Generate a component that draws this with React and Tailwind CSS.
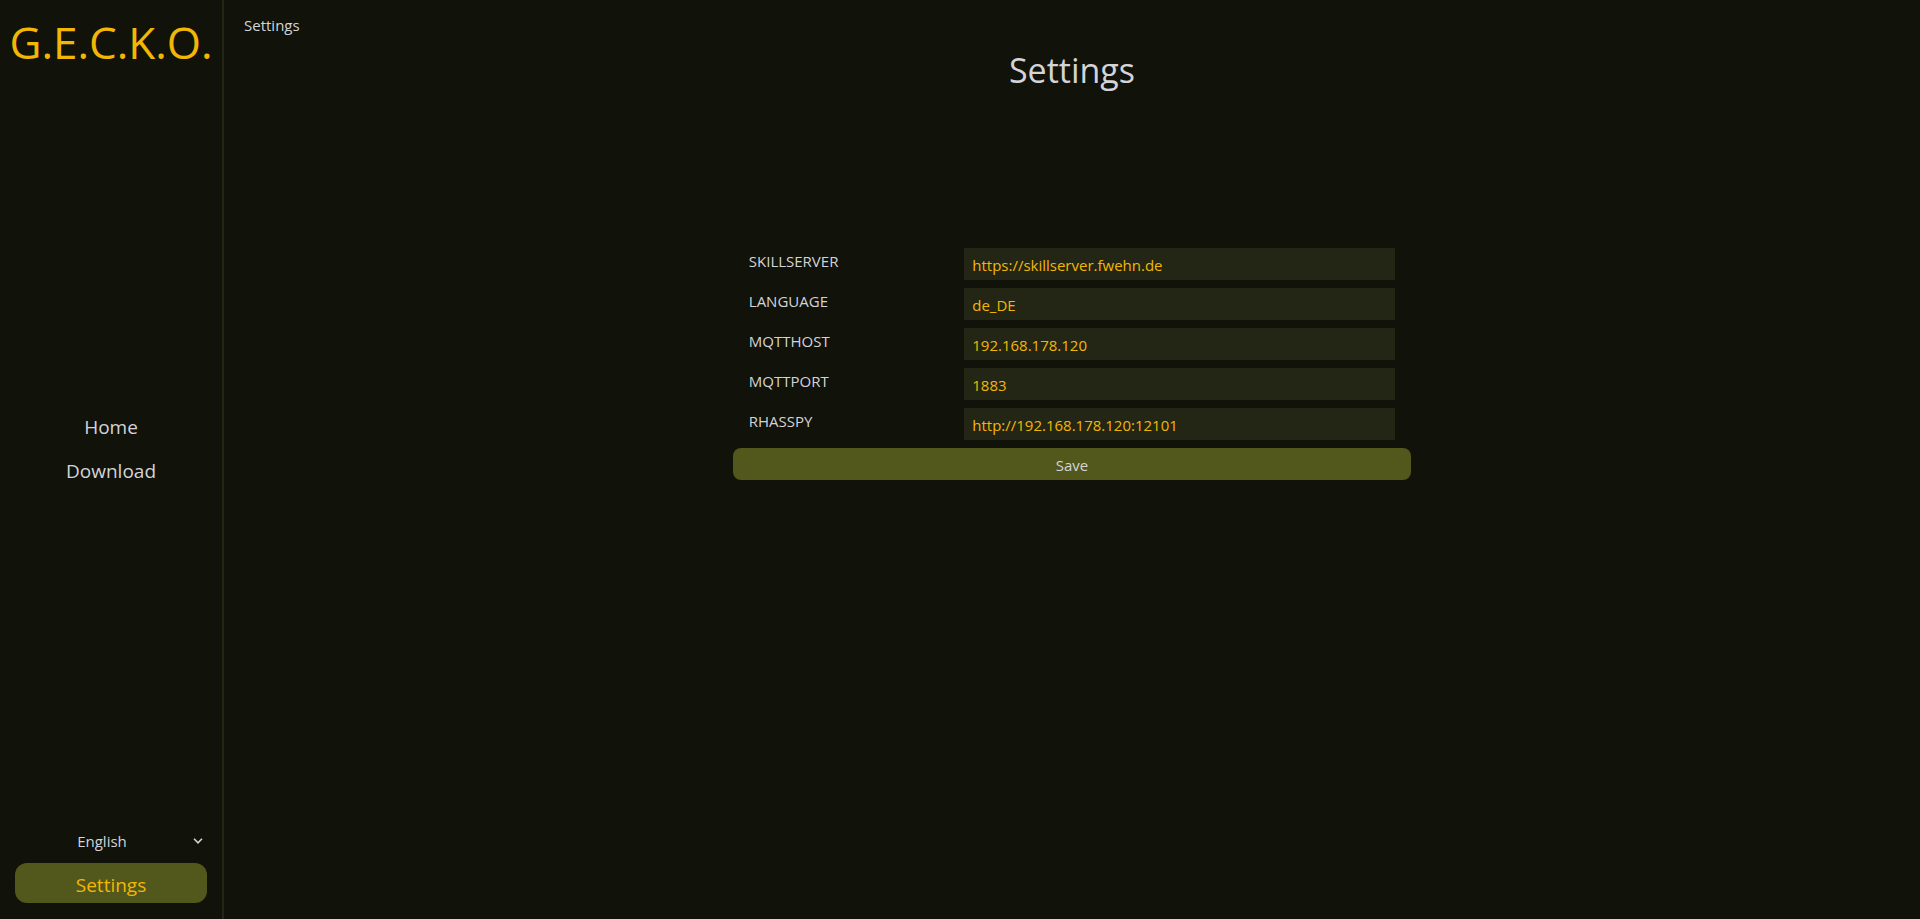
import { useState } from "react";

const FIELDS = [
  { key: "SKILLSERVER", value: "https://skillserver.fwehn.de" },
  { key: "LANGUAGE", value: "de_DE" },
  { key: "MQTTHOST", value: "192.168.178.120" },
  { key: "MQTTPORT", value: "1883" },
  { key: "RHASSPY", value: "http://192.168.178.120:12101" },
];

function Sidebar() {
  return (
    <aside className="flex w-56 shrink-0 flex-col border-r-2 border-[#242615]">
      <div className="pt-3 text-center text-[44px] leading-[60px] text-[#f2b705]">G.E.C.K.O.</div>
      <nav className="flex flex-1 flex-col items-center justify-center gap-1 pt-1.5 text-[19px] leading-7">
        <a href="#home" className="px-4 py-1.5">Home</a>
        <a href="#download" className="px-4 py-1.5">Download</a>
      </nav>
      <div className="flex flex-col px-[15px] pb-4">
        <div className="relative">
          <select
            aria-label="Language"
            defaultValue="en"
            className="h-11 w-full appearance-none bg-transparent pr-[18px] text-center text-[15px] leading-6 outline-none"
          >
            <option value="en">English</option>
            <option value="de">Deutsch</option>
          </select>
          <svg
            aria-hidden="true"
            viewBox="0 0 10 6"
            className="pointer-events-none absolute top-[19px] right-1 h-1.5 w-2.5 fill-none stroke-current stroke-[1.6]"
          >
            <path d="M1 .8 5 4.8 9 .8" />
          </svg>
        </div>
        <a
          href="#settings"
          className="flex h-10 items-center justify-center rounded-xl bg-[#52571b] pt-1 text-[19px] leading-7 text-[#f2b705]"
        >
          Settings
        </a>
      </div>
    </aside>
  );
}

function SettingsForm() {
  const [values, setValues] = useState(() => Object.fromEntries(FIELDS.map((f) => [f.key, f.value])));

  return (
    <form className="mt-[158px] flex w-2/5 flex-col gap-2" onSubmit={(e) => e.preventDefault()}>
      {FIELDS.map(({ key }) => (
        <div key={key} className="grid grid-cols-3 px-4">
          <label htmlFor={key} className="leading-[26px]">{key}</label>
          <input
            id={key}
            type="text"
            value={values[key]}
            onChange={(e) => setValues({ ...values, [key]: e.target.value })}
            className="col-span-2 h-8 min-w-0 bg-[#242615] px-2 pt-0.5 text-[#f2b705] outline-none"
          />
        </div>
      ))}
      <button type="submit" className="h-8 rounded-lg bg-[#52571b] pt-0.5">Save</button>
    </form>
  );
}

export default function App() {
  return (
    <div className="flex min-h-screen bg-[#11120a] font-['Open_Sans','Noto_Sans',sans-serif] text-[15px] text-[#d4d4d8]">
      <Sidebar />
      <main className="flex min-w-0 flex-1 flex-col">
        <div className="px-5 pt-3 leading-[26px]">Settings</div>
        <div className="flex flex-col items-center pt-3">
          <h1 className="text-[34px] leading-10">Settings</h1>
          <SettingsForm />
        </div>
      </main>
    </div>
  );
}
